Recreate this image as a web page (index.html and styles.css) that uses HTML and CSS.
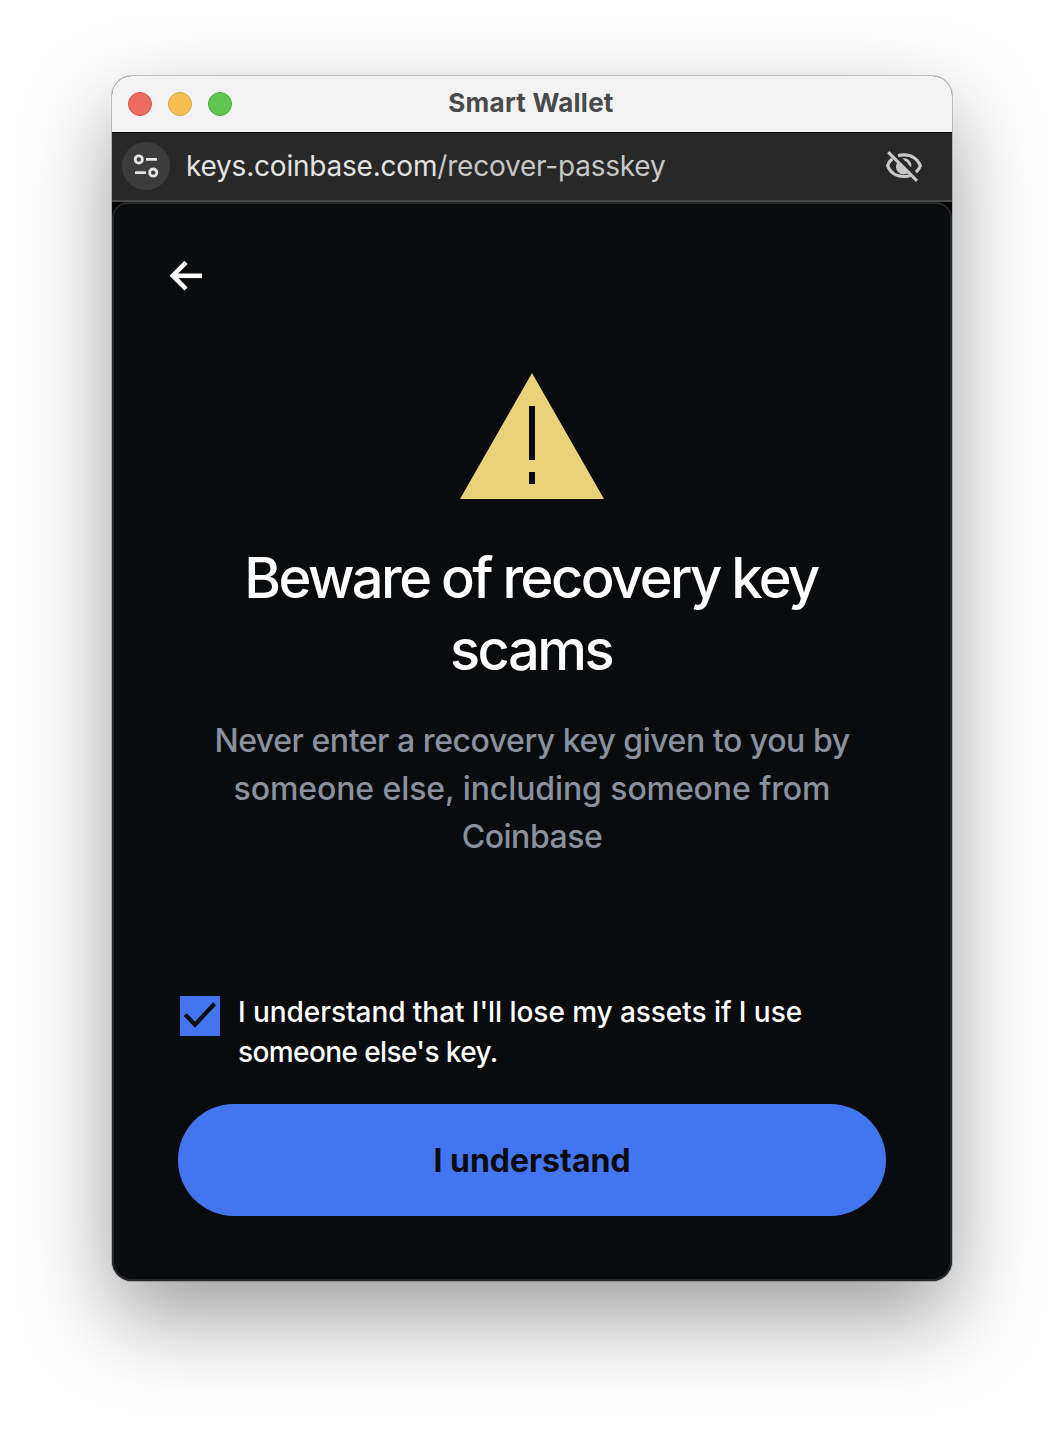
FILE: index.html
```html
<!DOCTYPE html>
<html lang="en">
<head>
<meta charset="utf-8">
<title>Smart Wallet</title>
<link rel="stylesheet" href="styles.css">
</head>
<body>
<main class="window">
  <header class="titlebar">
    <div class="lights"><span class="light close"></span><span class="light minimize"></span><span class="light expand"></span></div>
    <div class="window-title"><span>Smart Wallet</span></div>
  </header>
  <div class="addressbar">
    <div class="site-info">
      <svg width="48" height="48" viewBox="0 0 48 48" fill="none" stroke="#e3e3e3" stroke-width="2.8"><circle cx="16.8" cy="17.4" r="3.6"/><path d="M24 17.4h11M13 30.6h11"/><circle cx="31.2" cy="30.6" r="3.6"/></svg>
    </div>
    <div class="url"><span class="host">keys.coinbase.com</span><span class="path">/recover-passkey</span></div>
    <svg class="eye" width="40" height="36" viewBox="0 0 40 36" fill="none" stroke="#c7c7c7" stroke-width="3.2">
      <path d="M8.3 9.9C5.9 11.6 4.5 14 3.6 16.8C6.2 23.6 12.4 27.5 20 27.5c2.6 0 5-.5 7.1-1.4"/>
      <path d="M14.1 6.6C16 6 18 5.8 20 5.8c7.6 0 13.8 4.2 16.4 11c-.9 2.5-2.4 4.7-4.5 6.4"/>
      <path d="M13.3 13.6A7.5 7.5 0 0 0 23.8 24Z" fill="#c7c7c7" stroke="none"/>
      <path d="M18.4 9.3A7.5 7.5 0 0 1 27.2 18.3L24.3 15.4A4.8 4.8 0 0 0 21.1 12Z" fill="#c7c7c7" stroke="none"/>
      <path d="M4.2 3.2L33 31.8"/>
    </svg>
  </div>
  <section class="page">
    <svg class="back" width="36" height="36" viewBox="0 0 36 36" fill="none" stroke="#fff" stroke-width="4.6"><path d="M18 4.4L4.8 17.7L18 31"/><path d="M5 17.8h29"/></svg>
    <svg class="warning" width="144" height="126" viewBox="0 0 144 126"><path d="M72 0L144 126H0Z" fill="#e9d279"/><path d="M69 33h6v54h-6zM69 99h6v12h-6z" fill="#0a0b0d"/></svg>
    <h1>Beware of recovery key<br>scams</h1>
    <p class="warning-copy">Never enter a recovery key given to you by<br><span class="wide">someone else, including someone from</span><br>Coinbase</p>
    <div class="consent">
      <svg class="checkbox" width="40" height="40" viewBox="0 0 40 40"><path d="M0 0h40v40H0z" fill="#4475f0"/><path d="M5.2 18.6L15 28.7L34.5 7.8" fill="none" stroke="#0a0b0d" stroke-width="4.2"/></svg>
      <div class="consent-copy">I understand that I'll lose my assets if I use<br><span class="tight">someone else's key.</span></div>
    </div>
    <button class="confirm">I understand</button>
  </section>
</main>
</body>
</html>
```
FILE: styles.css
```css
* { box-sizing: border-box; }
body {
  margin: 0;
  height: 1430px;
  padding: 76px 112px 0;
  background: #fff;
  font-family: Inter, "Liberation Sans", sans-serif;
  overflow: hidden;
}
.window {
  width: 840px;
  height: 1205px;
  display: flex;
  flex-direction: column;
  border-radius: 20px;
  overflow: hidden;
  background: #000;
  box-shadow: 0 0 0 1px rgba(0,0,0,.2), 0 36px 88px rgba(0,0,0,.39);
}
.titlebar {
  height: 57px;
  display: grid;
  grid-template-columns: 120px 1fr 122px;
  background: #f3f3f3;
  border-bottom: 1px solid #000;
}
.lights { display: flex; gap: 16px; padding: 16px 0 0 16px; }
.light { width: 24px; height: 24px; border-radius: 50%; border: 1px solid; }
.close { background: #ed6b5f; border-color: #d65548; }
.minimize { background: #f6be4f; border-color: #d8a03c; }
.expand { background: #61c554; border-color: #4ca83e; }
.window-title {
  text-align: center;
  color: #4a4a4a;
  font-size: 26px;
  font-weight: 700;
  line-height: 54px;
  letter-spacing: .25px;
}
.addressbar {
  height: 69px;
  display: flex;
  align-items: center;
  padding: 0 28px 2px 10px;
  background: #282828;
  border-bottom: 2px solid #474947;
}
.site-info { width: 48px; height: 48px; border-radius: 50%; background: #3c3c3c; }
.url { flex: 1; margin-left: 16px; font-size: 28px; letter-spacing: -.21px; white-space: nowrap; color: #e3e3e3; }
.path { color: #c7c7c7; }
.eye { position: relative; top: 1px; }
.page {
  flex: 1;
  display: flex;
  flex-direction: column;
  border: 2px solid #25272a;
  border-radius: 16px 16px 20px 20px;
  background: #0a0b0d;
  padding: 54px 64px 0;
}
.back { margin-left: -10px; }
.warning { align-self: center; margin-top: 79px; }
h1 {
  margin: 43px 2px 0 0;
  text-align: center;
  color: #fff;
  font-size: 56px;
  font-weight: 500;
  line-height: 72px;
  letter-spacing: -2.5px;
  word-spacing: -1px;
  white-space: nowrap;
}
.warning-copy {
  margin: 31px 0 0;
  text-align: center;
  color: #8a919e;
  font-size: 32px;
  font-weight: 500;
  line-height: 48px;
  letter-spacing: -.46px;
  white-space: nowrap;
}
.wide { letter-spacing: -.1px; }
.consent { display: flex; gap: 18px; margin: 131px 0 0 2px; }
.checkbox { margin-top: 4px; flex: none; }
.consent-copy { color: #fff; font-size: 28px; font-weight: 500; line-height: 40px; letter-spacing: -.06px; white-space: nowrap; }
.tight { letter-spacing: -.6px; }
.confirm {
  height: 112px;
  margin-top: 32px;
  border: 0;
  border-radius: 56px;
  background: #4475f0;
  color: #0a0b0d;
  font-family: inherit;
  font-size: 32px;
  font-weight: 700;
}
```
